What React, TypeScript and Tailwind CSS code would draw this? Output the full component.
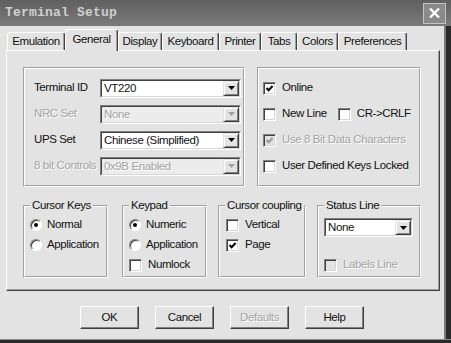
import React from "react";

const FONT = "font-['Liberation_Sans',Arial,sans-serif] text-[11.5px] tracking-[-0.4px]";
const DIS = "text-[#a3a3a3] [text-shadow:1px_1px_0_#ffffff]";

function Combo({ value, w, disabled }: { value: string; w: string; disabled?: boolean }) {
  return (
    <div className={`flex h-[19px] border border-t-[#808080] border-l-[#808080] border-b-white border-r-white ${w}`}>
      <div
        className={`flex flex-1 border border-t-[#404040] border-l-[#404040] border-b-[#d6d6d6] border-r-[#d6d6d6] ${
          disabled ? "bg-[#ececec]" : "bg-white"
        }`}
      >
        <span className={`flex-1 pl-[2px] leading-[15px] ${disabled ? DIS : "text-[#111]"}`}>{value}</span>
        <span className="flex w-[16px] items-center justify-center border border-t-[#e3e3e3] border-l-[#e3e3e3] border-b-[#404040] border-r-[#404040] bg-[#e3e3e3] shadow-[inset_1px_1px_0_#ffffff,inset_-1px_-1px_0_#808080]">
          <svg width="7" height="4" viewBox="0 0 7 4">
            <path d="M0 0h7L3.5 4z" fill={disabled ? "#a0a0a0" : "#000"} />
          </svg>
        </span>
      </div>
    </div>
  );
}

function Box({ checked, disabled }: { checked?: boolean; disabled?: boolean }) {
  return (
    <span
      className={`flex h-[13px] w-[13px] shrink-0 items-center justify-center border border-t-[#808080] border-l-[#808080] border-b-white border-r-white shadow-[inset_1px_1px_0_#404040,inset_-1px_-1px_0_#d6d6d6] ${
        disabled ? "bg-[#e3e3e3]" : "bg-white"
      }`}
    >
      {checked && (
        <svg width="9" height="9" viewBox="0 0 9 9">
          <path d="M1.5 4L3.6 6.2L7.6 2" fill="none" stroke={disabled ? "#9a9a9a" : "#000"} strokeWidth="2" />
        </svg>
      )}
    </span>
  );
}

function Check({ label, checked, disabled }: { label: string; checked?: boolean; disabled?: boolean }) {
  return (
    <div className="flex h-[20px] items-center gap-[6px]">
      <Box checked={checked} disabled={disabled} />
      <span className={disabled ? DIS : "text-[#111]"}>{label}</span>
    </div>
  );
}

function Radio({ label, checked }: { label: string; checked?: boolean }) {
  return (
    <div className="flex h-[20px] items-center gap-[5px]">
      <span className="flex h-[12px] w-[12px] shrink-0 items-center justify-center rounded-full border border-t-[#808080] border-l-[#808080] border-b-white border-r-white bg-white shadow-[inset_1px_1px_0_#404040]">
        {checked && <span className="h-[4px] w-[4px] rounded-full bg-black" />}
      </span>
      <span className="text-[#111]">{label}</span>
    </div>
  );
}

function Group({ title, w, className, children }: { title?: string; w: string; className?: string; children: React.ReactNode }) {
  return (
    <div className={`relative border border-t-[#a0a0a0] border-l-[#a0a0a0] border-b-white border-r-white ${w} ${className ?? ""}`}>
      <div className="h-full border border-t-white border-l-white border-b-[#a0a0a0] border-r-[#a0a0a0]">{children}</div>
      {title && (
        <span className="absolute top-[-7px] left-[6px] bg-[#e3e3e3] px-[2px] leading-[13px] text-[#111]">{title}</span>
      )}
    </div>
  );
}

function Button({ label, disabled }: { label: string; disabled?: boolean }) {
  return (
    <div
      className={`flex h-[23px] w-[59px] items-center justify-center border border-t-white border-l-white border-b-[#404040] border-r-[#404040] shadow-[inset_-1px_-1px_0_#808080] ${
        disabled ? DIS : "text-[#111]"
      }`}
    >
      {label}
    </div>
  );
}

const tabs: [string, string][] = [
  ["Emulation", "w-[58px]"],
  ["General", "w-[53px]"],
  ["Display", "w-[44px]"],
  ["Keyboard", "w-[57px]"],
  ["Printer", "w-[42px]"],
  ["Tabs", "w-[36px]"],
  ["Colors", "w-[41px]"],
  ["Preferences", "w-[69px]"],
];

export default function App() {
  return (
    <div className={`flex h-[343px] w-[451px] flex-col overflow-hidden bg-[#e3e3e3] ${FONT}`}>
      {/* Title bar */}
      <div className="flex h-[26px] shrink-0 items-center justify-between bg-linear-to-b from-[#606060] to-[#7a7a7a] pl-[5px] pr-[5px]">
        <span className="font-['Liberation_Mono',monospace] text-[13px] font-bold tracking-[0.2px] text-[#cfcfcf]">
          Terminal Setup
        </span>
        <div className="flex h-[21px] w-[23px] items-center justify-center border border-[#c4c4c4] bg-[#8a8a8a]">
          <svg width="13" height="12" viewBox="0 0 13 12">
            <path d="M2 1.5L11 10.5M11 1.5L2 10.5" stroke="#fff" strokeWidth="2.4" />
          </svg>
        </div>
      </div>

      <div className="flex flex-1">
        <div className="flex flex-1 flex-col pt-[3px]">
          {/* Tabs */}
          <div className="ml-[7px] flex h-[21px] items-end">
            {tabs.map(([name, w]) =>
              name === "General" ? (
                <div
                  key={name}
                  className={`relative z-10 -mb-px flex h-[22px] items-center justify-center rounded-t-[3px] border-t border-l border-r border-t-white border-l-white border-r-[#404040] bg-[#e3e3e3] pb-[2px] text-[#111] shadow-[inset_-1px_0_0_#a0a0a0] ${w}`}
                >
                  {name}
                </div>
              ) : (
                <div
                  key={name}
                  className={`flex h-[18px] items-center justify-center rounded-t-[3px] border-t border-l border-r border-t-white border-l-white border-r-[#404040] pt-[1px] text-[#111] shadow-[inset_-1px_0_0_#a0a0a0] ${w}`}
                >
                  {name}
                </div>
              )
            )}
          </div>

          {/* Tab panel */}
          <div className="ml-[6px] w-[434px] border-t border-l border-r border-b border-t-white border-l-white border-r-[#404040] border-b-[#404040] pt-[16px] pb-[12px] pl-[16px] shadow-[inset_-1px_-1px_0_#a0a0a0]">
            <div className="flex">
              <Group w="w-[222px]" className="h-[120px]">
                <div className="flex flex-col gap-[6px] pt-[9px] pl-[9px]">
                  {[
                    ["Terminal ID", "VT220", false],
                    ["NRC Set", "None", true],
                    ["UPS Set", "Chinese (Simplified)", false],
                    ["8 bit Controls", "0x9B Enabled", true],
                  ].map(([label, value, dis]) => (
                    <div key={label as string} className="flex h-[20px] items-center">
                      <span className={`w-[66px] whitespace-nowrap ${dis ? DIS : "text-[#111]"}`}>{label}</span>
                      <Combo value={value as string} w="w-[141px]" disabled={dis as boolean} />
                    </div>
                  ))}
                </div>
              </Group>

              <Group w="w-[164px]" className="ml-[12px] h-[120px]">
                <div className="flex flex-col gap-[6px] pt-[9px] pl-[4px]">
                  <Check label="Online" checked />
                  <div className="flex items-center">
                    <Check label="New Line" />
                    <div className="ml-[11px]">
                      <Check label="CR->CRLF" />
                    </div>
                  </div>
                  <Check label="Use 8 Bit Data Characters" checked disabled />
                  <Check label="User Defined Keys Locked" />
                </div>
              </Group>
            </div>

            <div className="mt-[18px] flex">
              <Group title="Cursor Keys" w="w-[85px]" className="h-[73px]">
                <div className="flex flex-col pt-[8px] pl-[5px]">
                  <Radio label="Normal" checked />
                  <Radio label="Application" />
                </div>
              </Group>
              <Group title="Keypad" w="w-[85px]" className="ml-[14px] h-[73px]">
                <div className="flex flex-col pt-[8px] pl-[5px]">
                  <Radio label="Numeric" checked />
                  <Radio label="Application" />
                  <Check label="Numlock" />
                </div>
              </Group>
              <Group title="Cursor coupling" w="w-[88px]" className="ml-[11px] h-[73px]">
                <div className="flex flex-col pt-[8px] pl-[6px]">
                  <Check label="Vertical" />
                  <Check label="Page" checked />
                </div>
              </Group>
              <Group title="Status Line" w="w-[104px]" className="ml-[11px] h-[73px]">
                <div className="flex flex-col pt-[11px] pl-[5px]">
                  <Combo value="None" w="w-[89px]" />
                  <div className="mt-[18px]">
                    <Check label="Labels Line" disabled />
                  </div>
                </div>
              </Group>
            </div>
          </div>

          {/* Buttons */}
          <div className="mt-[15px] flex justify-center gap-[16px]">
            <Button label="OK" />
            <Button label="Cancel" />
            <Button label="Defaults" disabled />
            <Button label="Help" />
          </div>
        </div>
        <div className="w-[7px] border-l-2 border-l-[#7a7a7a] bg-[#2a2a2a]" />
      </div>
      <div className="h-[4px] shrink-0 border-t border-t-[#8a8a8a] bg-[#2a2a2a]" />
    </div>
  );
}
